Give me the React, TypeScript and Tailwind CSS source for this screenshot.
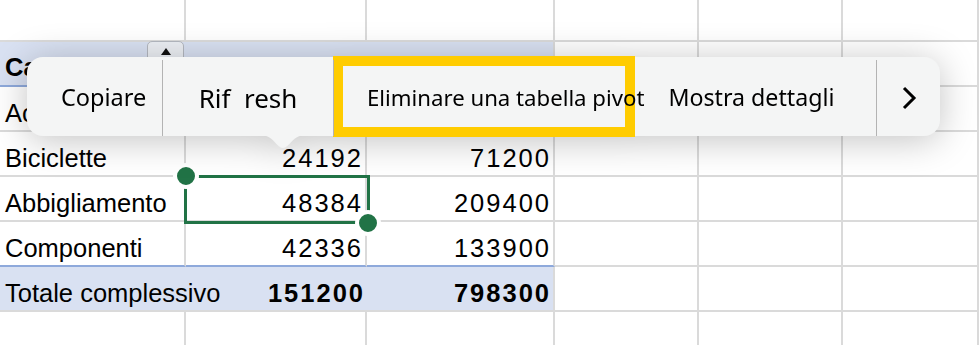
import { ReactNode } from 'react'

const cellFont = { fontFamily: '"Liberation Sans", Arial, sans-serif' }
const menuFont = { fontFamily: '"Noto Sans", "Open Sans", sans-serif' }

function Cell({
  w,
  children,
  className = '',
}: {
  w: string
  children?: ReactNode
  className?: string
}) {
  return (
    <div className={`${w} h-full shrink-0 flex items-end whitespace-nowrap px-[5px] pb-[4px] ${className}`}>
      {children}
    </div>
  )
}

const grid = 'border-r-2 border-b-2 border-[#dadada]'
const num = 'justify-end tracking-[2px] pr-[2px]'

function EmptyTail() {
  return (
    <>
      <Cell w="w-[144px]" className={grid} />
      <Cell w="w-[144px]" className={grid} />
      <Cell w="flex-1" className={grid} />
    </>
  )
}

function DataRow({ name, a, b, last }: { name: string; a: string; b: string; last?: boolean }) {
  const bottom = last ? 'border-b-2 border-b-[#8ea9db]' : ''
  return (
    <div className="flex h-[45px]">
      <Cell w="w-[186px]" className={`${grid} ${bottom}`}>{name}</Cell>
      <Cell w="w-[181px]" className={`${grid} ${num} ${bottom}`}>{a}</Cell>
      <Cell w="w-[188px]" className={`${grid} ${num} ${bottom}`}>{b}</Cell>
      <EmptyTail />
    </div>
  )
}

export default function App() {
  return (
    <div className="relative w-[979px] h-[345px] overflow-hidden bg-white text-black text-[25.5px] leading-none" style={cellFont}>
      {/* sheet */}
      <div className="flex flex-col">
        <div className="flex h-[42px]">
          <Cell w="w-[186px]" className={grid} />
          <Cell w="w-[181px]" className={grid} />
          <Cell w="w-[188px]" className={grid} />
          <EmptyTail />
        </div>

        <div className="flex h-[45px] font-bold">
          <Cell w="w-[186px]" className="bg-[#d9e1f2] border-b-2 border-[#8ea9db] justify-between !pb-[5px]">
            <span>Categoria</span>
            <div className="self-start -mt-[1px] -mr-[3px] w-[37px] h-[30px] rounded-[5px] border border-[#b4b8c0] bg-[#eceff4] flex justify-center pt-[6px]">
              <svg width="10" height="7" viewBox="0 0 10 7">
                <path d="M5 0 L10 7 L0 7 Z" fill="#111" />
              </svg>
            </div>
          </Cell>
          <Cell w="w-[181px]" className="bg-[#d9e1f2] border-b-2 border-[#8ea9db] overflow-hidden !pb-[5px]">Somma di Quantità</Cell>
          <Cell w="w-[188px]" className="bg-[#d9e1f2] border-b-2 border-b-[#8ea9db] border-r-2 border-r-[#dadada] overflow-hidden !pb-[5px]">Somma di Vendite</Cell>
          <EmptyTail />
        </div>

        <DataRow name="Accessori" a="36288" b="383800" />
        <DataRow name="Biciclette" a="24192" b="71200" />
        <DataRow name="Abbigliamento" a="48384" b="209400" />
        <DataRow name="Componenti" a="42336" b="133900" last />

        <div className="flex h-[45px]">
          <Cell w="w-[186px]" className="bg-[#d9e1f2] border-b-2 border-[#dadada]">
            <span className="relative z-10">Totale complessivo</span>
          </Cell>
          <Cell w="w-[181px]" className={`bg-[#d9e1f2] border-b-2 border-[#dadada] font-bold ${num}`}>151200</Cell>
          <Cell w="w-[188px]" className={`bg-[#d9e1f2] ${grid} font-bold ${num}`}>798300</Cell>
          <EmptyTail />
        </div>

        <div className="flex h-[40px]">
          <Cell w="w-[186px]" className={grid} />
          <Cell w="w-[181px]" className={grid} />
          <Cell w="w-[188px]" className={grid} />
          <EmptyTail />
        </div>
      </div>

      {/* selection */}
      <div className="absolute left-[184px] top-[175px] w-[186px] h-[49px] border-[3px] border-[#217346]" />
      <div className="absolute left-[173px] top-[163px] w-[26px] h-[26px] rounded-full bg-[#217346] border-4 border-white" />
      <div className="absolute left-[355px] top-[210px] w-[26px] h-[26px] rounded-full bg-[#217346] border-4 border-white" />

      {/* context menu */}
      <div className="absolute z-20 left-[27px] top-[57px] drop-shadow-[0_4px_18px_rgba(0,0,0,0.24)]" style={menuFont}>
        <div className="relative w-[913px] h-[79px] rounded-[16px] bg-[#f4f5f5]">
          <div className="absolute left-[306px] -top-[1px] w-[302px] h-[81px] border-[10px] border-[#ffcc00]" />
          <div className="relative flex h-full items-center pt-[3px]">
            <div className="w-[135px] h-full flex items-center pl-[34px] text-[23.5px]">Copiare</div>
            <div className="w-px h-full bg-[#b3b3b3]" />
            <div className="w-[170px] h-full flex items-center justify-center text-[26px] whitespace-pre">Rif  resh</div>
            <div className="w-px h-full bg-[#b3b3b3]" />
            <div className="flex-1 h-full flex items-center pl-[33px]">
              <span className="text-[22.2px]">Eliminare una tabella pivot</span>
              <span className="ml-[24px] text-[23.2px]">Mostra dettagli</span>
            </div>
            <div className="w-px h-full bg-[#b3b3b3]" />
            <div className="w-[63px] h-full flex items-center justify-center">
              <svg width="16" height="24" viewBox="0 0 16 24">
                <path d="M3 2 L13 12 L3 22" fill="none" stroke="#000" strokeWidth="3" />
              </svg>
            </div>
          </div>
          <svg className="absolute left-[234px] top-[78px]" width="44" height="14" viewBox="0 0 44 14">
            <path d="M0 0 C12 0 16 13 22 13 C28 13 32 0 44 0 Z" fill="#f4f5f5" />
          </svg>
        </div>
      </div>
    </div>
  )
}
